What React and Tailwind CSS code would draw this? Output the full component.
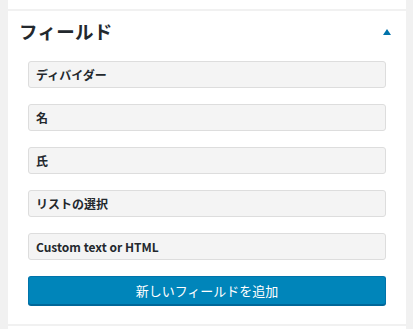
export default function App() {
  const font = { fontFamily: '"Noto Sans CJK JP", "Noto Sans", sans-serif' };
  const items = ["ディバイダー", "名", "氏", "リストの選択", "Custom text or HTML"];
  return (
    <div className="w-[413px] h-[329px] bg-[#f1f1f1] overflow-hidden" style={font}>
      <div className="ml-2 w-[398px] h-[9px] bg-white" />
      <div className="ml-2 w-[398px] mt-[2px] bg-white pb-[19px]">
        <div className="flex items-center justify-between pl-[11px] pr-[15px] h-[40px]">
          <h2 className="text-[18.5px] font-semibold text-[#23282d] leading-none tracking-[0.3px]">フィールド</h2>
          <svg width="8" height="6" viewBox="0 0 8 6" className="mt-[1px]">
            <polygon points="4,0 8,6 0,6" fill="#0073aa" />
          </svg>
        </div>
        <div className="px-5 pt-[10px] flex flex-col gap-4">
          {items.map((t) => (
            <div
              key={t}
              className="h-[27px] bg-[#f4f4f4] border border-[#dddddd] rounded-[3px] flex items-center pl-[7px] text-[12px] font-semibold text-[#23282d]"
            >
              {t}
            </div>
          ))}
          <button className="h-[29px] bg-[#0085ba] border border-[#0073aa] border-b-[#006799] rounded-[3px] text-white text-[13px] flex items-center justify-center shadow-[0_1px_0_#006799]">
            新しいフィールドを追加
          </button>
        </div>
      </div>
      <div className="ml-2 w-[398px] mt-[2px] h-[10px] bg-white" />
    </div>
  );
}
